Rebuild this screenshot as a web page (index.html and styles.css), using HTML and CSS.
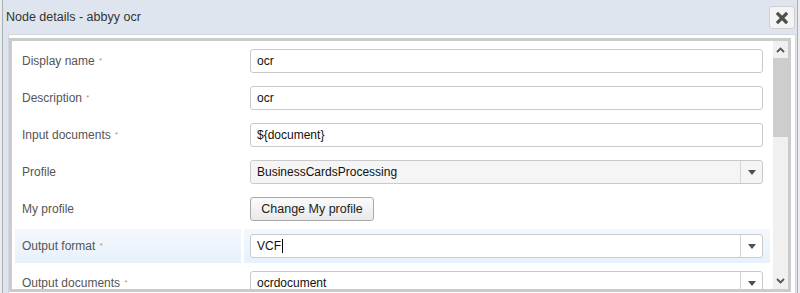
FILE: index.html
```html
<!DOCTYPE html>
<html lang="en">
<head>
    <meta charset="UTF-8">
    <title>Node details - abbyy ocr</title>
    <link rel="stylesheet" href="styles.css">
</head>
<body>
    <div class="dialog">
        <div class="titlebar">
            <span class="title">Node details - abbyy ocr</span>
            <button class="close" title="Close">
                <svg width="12" height="12" viewBox="0 0 12 12"><path d="M2 2L10 10M10 2L2 10" stroke="#4f4f4f" stroke-width="3.2" stroke-linecap="square"/></svg>
            </button>
        </div>

        <div class="panel">
            <div class="frame">
                <div class="form-area">
                    <table class="form">
                        <tr>
                            <td class="label">Display name <span class="req">*</span></td>
                            <td class="field"><div class="input">ocr</div></td>
                        </tr>
                        <tr>
                            <td class="label">Description <span class="req">*</span></td>
                            <td class="field"><div class="input">ocr</div></td>
                        </tr>
                        <tr>
                            <td class="label">Input documents <span class="req">*</span></td>
                            <td class="field"><div class="input">${document}</div></td>
                        </tr>
                        <tr>
                            <td class="label">Profile</td>
                            <td class="field">
                                <div class="input select disabled">
                                    <span class="value">BusinessCardsProcessing</span>
                                    <span class="arrow"></span>
                                </div>
                            </td>
                        </tr>
                        <tr>
                            <td class="label">My profile</td>
                            <td class="field"><button class="btn">Change My profile</button></td>
                        </tr>
                        <tr class="focused">
                            <td class="label">Output format <span class="req">*</span></td>
                            <td class="field">
                                <div class="input select">
                                    <span class="value">VCF<span class="caret"></span></span>
                                    <span class="arrow"></span>
                                </div>
                            </td>
                        </tr>
                        <tr>
                            <td class="label">Output documents <span class="req">*</span></td>
                            <td class="field">
                                <div class="input select">
                                    <span class="value">ocrdocument</span>
                                    <span class="arrow"></span>
                                </div>
                            </td>
                        </tr>
                    </table>
                </div>

                <!-- scrollbar of the form -->
                <div class="scrollbar">
                    <div class="sb-btn">
                        <svg width="9" height="6" viewBox="0 0 9 6"><path d="M1 5L4.5 1.5L8 5" fill="none" stroke="#555" stroke-width="1.8"/></svg>
                    </div>
                    <div class="sb-track"><div class="sb-thumb"></div></div>
                    <div class="sb-btn">
                        <svg width="9" height="6" viewBox="0 0 9 6"><path d="M1 1L4.5 4.5L8 1" fill="none" stroke="#555" stroke-width="1.8"/></svg>
                    </div>
                </div>
            </div>
        </div>
    </div>
</body>
</html>
```

FILE: styles.css
```css
/* Base */
* {
    box-sizing: border-box;
    margin: 0;
    padding: 0;
}

body {
    font-family: 'Liberation Sans', Arial, sans-serif;
    font-size: 12px;
    background: #ececec;
    height: 293px;
    overflow: hidden;
}

/* Dialog */
.dialog {
    margin-left: 2px;
    width: 796px;
    height: 293px;
    background: #dfe5ee;
    border-left: 1px solid #a9b0b9;
    border-right: 1px solid #a9b0b9;
    overflow: hidden;
}

.titlebar {
    height: 34px;
    display: flex;
    align-items: center;
    justify-content: space-between;
    padding: 0 2px 0 3px;
}

.title {
    color: #333;
    font-size: 12.5px;
}

.close {
    width: 26px;
    height: 23px;
    margin-top: 1px;
    display: flex;
    align-items: center;
    justify-content: center;
    background: #f4f4f4;
    border: 1px solid #cfcfcf;
    border-radius: 3px;
}

/* Panel */
.panel {
    margin: 0 1px 0 5px;
    background: #fff;
    border: 1px solid #d2d6dc;
    padding: 3px 4px 0 0;
    height: 270px;
}

.frame {
    display: flex;
    border: 3px solid #cbcbcb;
    height: 254px;
}

.form-area {
    width: 761px;
    height: 248px;
    overflow: hidden;
}

/* Form table */
.form {
    border-collapse: separate;
    border-spacing: 3px;
    width: 761px;
}

.form td {
    height: 34px;
    vertical-align: middle;
}

.label {
    width: 226px;
    padding-left: 7px;
    color: #555;
}

.req {
    color: #d9894a;
    font-size: 8px;
    position: relative;
    top: -2px;
    margin-left: 1px;
}

.field {
    padding: 5px 7px 5px 6px;
}

.focused td {
    background: linear-gradient(#f3f8fd, #e7f1fb);
}

.input {
    height: 24px;
    border: 1px solid #cacaca;
    border-radius: 3px;
    background: #fff;
    padding: 0 6px;
    line-height: 22px;
    color: #111;
}

.select {
    display: flex;
    padding-right: 0;
}

.select .value {
    flex: 1;
}

.select.disabled {
    background: #f5f5f5;
}

.select .arrow {
    width: 22px;
    border-left: 1px solid #d4d4d4;
    position: relative;
}

.select .arrow::after {
    content: '';
    position: absolute;
    left: 7px;
    top: 9px;
    border-left: 4px solid transparent;
    border-right: 4px solid transparent;
    border-top: 5px solid #4f4f4f;
}

.caret {
    display: inline-block;
    width: 1px;
    height: 14px;
    background: #000;
    vertical-align: -3px;
    margin-left: 1px;
}

.btn {
    width: 124px;
    height: 24px;
    font-family: inherit;
    font-size: 12.5px;
    color: #222;
    background: linear-gradient(#fbfbfb, #e9e9e9);
    border: 1px solid #a8a8a8;
    border-radius: 3px;
}

/* Scrollbar */
.scrollbar {
    width: 15px;
    background: #f0f0f0;
    display: flex;
    flex-direction: column;
}

.sb-btn {
    height: 17px;
    display: flex;
    align-items: center;
    justify-content: center;
}

.sb-track {
    flex: 1;
}

.sb-thumb {
    height: 79px;
    background: #cdcdcd;
}
```
